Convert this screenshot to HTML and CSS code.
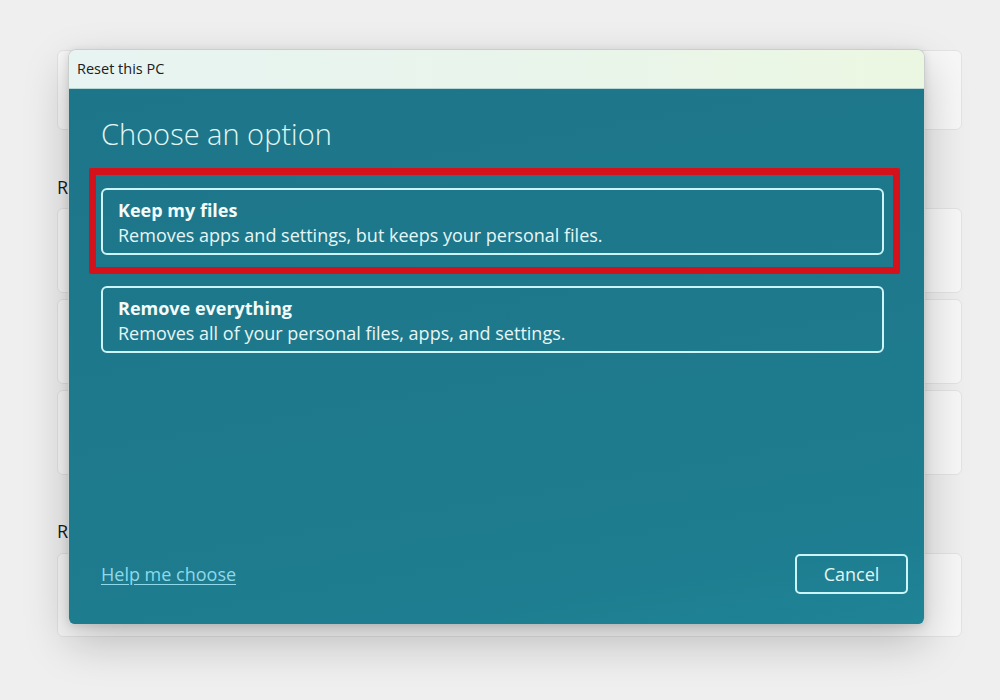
FILE: index.html
```html
<!DOCTYPE html>
<html lang="en">
<head>
<meta charset="utf-8">
<title>Reset this PC</title>
<link rel="stylesheet" href="styles.css">
</head>
<body>
<div class="page">
  <div class="card card-top"></div>
  <div class="section-label">Recovery options</div>
  <div class="card-group">
    <div class="card card-row"></div>
    <div class="card card-row"></div>
    <div class="card card-row"></div>
  </div>
  <div class="section-label section-label-2">Related support</div>
  <div class="card card-bottom"></div>
</div>

<div class="dialog">
  <div class="titlebar">Reset this PC</div>
  <div class="dialog-body">
    <h1 class="heading">Choose an option</h1>
    <div class="options">
      <div class="option">
        <div class="option-title">Keep my files</div>
        <div class="option-desc">Removes apps and settings, but keeps your personal files.</div>
      </div>
      <div class="option">
        <div class="option-title">Remove everything</div>
        <div class="option-desc">Removes all of your personal files, apps, and settings.</div>
      </div>
    </div>
    <div class="footer">
      <a class="help-link" href="#">Help me choose</a>
      <button class="cancel-btn" type="button">Cancel</button>
    </div>
  </div>
  <div class="highlight"></div>
</div>
</body>
</html>
```
FILE: styles.css
```css
* { box-sizing: border-box; }

html, body {
  margin: 0;
  padding: 0;
}

body {
  width: 1000px;
  height: 700px;
  overflow: hidden;
  background: #efefef;
  font-family: "Open Sans", "Noto Sans", "Liberation Sans", sans-serif;
  position: relative;
}

.page {
  margin-left: 57px;
  width: 905px;
  padding-top: 50px;
  display: flex;
  flex-direction: column;
}

.card {
  background: #f7f7f7;
  border: 1px solid #e3e3e3;
  border-radius: 6px;
}

.card-top { height: 80px; }

.section-label {
  font-size: 18px;
  color: #1a1a1a;
  line-height: 24px;
  margin-top: 45px;
  margin-bottom: 9px;
  white-space: nowrap;
}

.section-label-2 {
  margin-top: 44px;
  margin-bottom: 10px;
}

.card-group {
  display: flex;
  flex-direction: column;
  gap: 6px;
}

.card-row { height: 85px; }

.card-bottom { height: 84px; }

.dialog {
  position: absolute;
  left: 68px;
  top: 49px;
  width: 857px;
  height: 575px;
  border-radius: 8px 8px 6px 6px;
  overflow: hidden;
  box-shadow: 0 18px 45px rgba(0, 0, 0, 0.22), 0 2px 8px rgba(0, 0, 0, 0.12);
  display: flex;
  flex-direction: column;
  border: 1px solid #c9cfcc;
  border-bottom: none;
}

.titlebar {
  height: 39px;
  flex: none;
  background: linear-gradient(90deg, #e7f4f2 0%, #e9f5ea 60%, #ecf7e2 100%);
  font-size: 14.5px;
  color: #202020;
  padding-left: 8px;
  line-height: 38px;
  border-bottom: 1px solid #b7d6d6;
}

.dialog-body {
  flex: 1;
  display: flex;
  flex-direction: column;
  background: linear-gradient(170deg, #1d7589 0%, #1e798c 50%, #1e7d90 85%, #1f8496 100%);
  padding: 25px 16px 30px 32px;
}

.heading {
  margin: 0;
  font-size: 29px;
  font-weight: 300;
  line-height: 40px;
  color: #e2f6f4;
}

.options {
  margin-top: 34px;
  margin-right: 24px;
  display: flex;
  flex-direction: column;
  gap: 31px;
}

.option {
  border: 2px solid #cbf5f6;
  border-radius: 6px;
  padding: 8px 15px 5px;
  color: #f3fbfb;
}

.option-title {
  font-size: 18px;
  font-weight: 700;
  line-height: 24px;
}

.option-desc {
  font-size: 18px;
  line-height: 26px;
  color: #e6f6f6;
}

.footer {
  margin-top: auto;
  display: flex;
  justify-content: space-between;
  align-items: center;
}

.help-link {
  font-size: 18px;
  color: #8ed9ea;
  text-decoration: underline;
  text-underline-offset: 3px;
}

.cancel-btn {
  width: 113px;
  height: 40px;
  border: 2px solid #cbf5f6;
  border-radius: 5px;
  background: transparent;
  color: #e2f6f4;
  font-family: inherit;
  font-size: 18px;
  padding: 0;
}

.highlight {
  position: absolute;
  left: 20px;
  top: 118px;
  width: 811px;
  height: 106px;
  border: 7px solid #d4121c;
  border-radius: 2px;
  pointer-events: none;
}
```
